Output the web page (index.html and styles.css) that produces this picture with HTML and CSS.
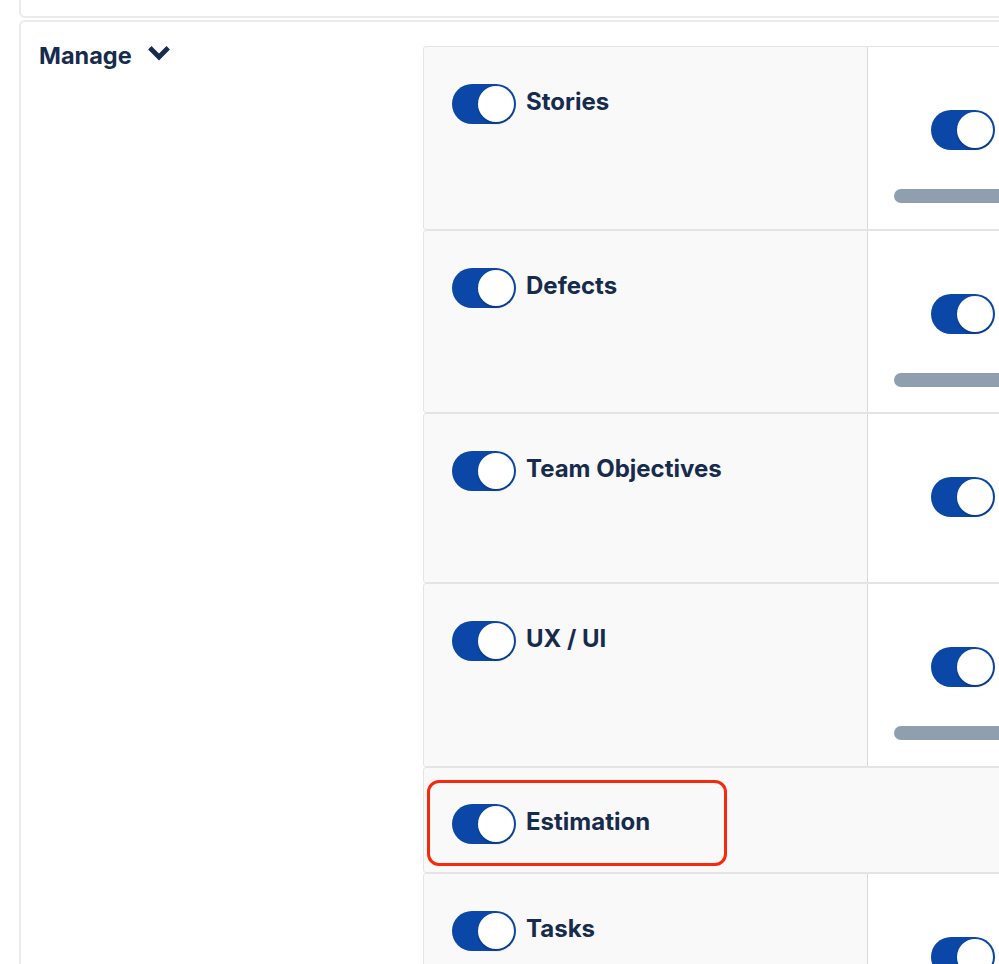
FILE: index.html
```html
<!DOCTYPE html>
<html lang="en">
<head>
<meta charset="utf-8">
<title>Manage</title>
<link rel="stylesheet" href="styles.css">
</head>
<body>
<div class="top-card"></div>
<div class="card">
  <div class="side">
    <div class="side-title">
      <span>Manage</span>
      <svg class="chev" width="22" height="15" viewBox="0 0 22 15"><polyline points="3.5,3.5 11,11 18.5,3.5" fill="none" stroke="#172b4d" stroke-width="4.8" stroke-linejoin="miter" stroke-linecap="square"/></svg>
    </div>
  </div>
  <div class="grid">
    <div class="row r1">
      <div class="cell-left"><div class="item"><span class="toggle"><span class="knob"></span></span><span class="label">Stories</span></div></div>
      <div class="cell-right"><span class="toggle toggle-r"><span class="knob"></span></span><div class="bar"></div></div>
    </div>
    <div class="row r2">
      <div class="cell-left"><div class="item"><span class="toggle"><span class="knob"></span></span><span class="label">Defects</span></div></div>
      <div class="cell-right"><span class="toggle toggle-r"><span class="knob"></span></span><div class="bar"></div></div>
    </div>
    <div class="row r3">
      <div class="cell-left"><div class="item"><span class="toggle"><span class="knob"></span></span><span class="label">Team Objectives</span></div></div>
      <div class="cell-right"><span class="toggle toggle-r"><span class="knob"></span></span></div>
    </div>
    <div class="row r4">
      <div class="cell-left"><div class="item"><span class="toggle"><span class="knob"></span></span><span class="label">UX / UI</span></div></div>
      <div class="cell-right"><span class="toggle toggle-r"><span class="knob"></span></span><div class="bar"></div></div>
    </div>
    <div class="row r5">
      <div class="cell-full">
        <div class="highlight"><div class="item"><span class="toggle"><span class="knob"></span></span><span class="label">Estimation</span></div></div>
      </div>
    </div>
    <div class="row r6">
      <div class="cell-left"><div class="item"><span class="toggle"><span class="knob"></span></span><span class="label">Tasks</span></div></div>
      <div class="cell-right"><span class="toggle toggle-r"><span class="knob"></span></span></div>
    </div>
  </div>
</div>
</body>
</html>
```

FILE: styles.css
```css
* { box-sizing: border-box; }
html, body { margin: 0; padding: 0; }
body {
  width: 999px;
  height: 964px;
  overflow: hidden;
  background: #fff;
  font-family: Inter, "Noto Sans", "Liberation Sans", sans-serif;
  color: #172b4d;
}
.top-card {
  margin-left: 19px;
  width: 1200px;
  height: 18px;
  border: 2px solid #ebebeb;
  border-top: 0;
  border-right: 0;
  border-bottom-left-radius: 6px;
}
.card {
  margin-top: 2px;
  margin-left: 19px;
  width: 1300px;
  height: 1200px;
  border: 2px solid #ebebeb;
  border-right: 0;
  border-radius: 6px 0 0 6px;
  display: flex;
  align-items: flex-start;
}
.side {
  flex: none;
  width: 402px;
  padding: 20px 0 0 18px;
}
.side-title {
  display: flex;
  align-items: center;
  gap: 16px;
  font-size: 23.5px;
  line-height: 28px;
  font-weight: 700;
}
.chev { margin-top: -5px; }
.grid {
  flex: none;
  width: 760px;
  margin-top: 24px;
  display: flex;
  flex-direction: column;
}
.row {
  display: flex;
  border: 1px solid #e4e4e4;
  border-radius: 3px;
  background: #f9f9f9;
}
.r1 { height: 184px; }
.r2 { height: 183px; }
.r3 { height: 170px; }
.r4 { height: 184px; }
.r5 { height: 106px; }
.r6 { height: 200px; }
.cell-left {
  flex: none;
  width: 444px;
  padding: 37px 0 0 28px;
  border-right: 1px solid #dadada;
}
.cell-right {
  flex: 1;
  background: #fff;
  padding: 63px 0 0 26px;
}
.cell-full {
  flex: 1;
  padding: 12px 0 0 3px;
}
.highlight {
  width: 300px;
  height: 86px;
  border: 3px solid #f7290c;
  border-radius: 12px;
  padding: 21px 0 0 22px;
}
.item {
  display: flex;
  align-items: flex-start;
  gap: 10px;
}
.label {
  font-size: 24px;
  line-height: 28px;
  font-weight: 700;
  padding-top: 4px;
  white-space: nowrap;
}
.toggle {
  position: relative;
  display: block;
  flex: none;
  width: 64px;
  height: 40px;
  border-radius: 20px;
  background: #0a47a6;
}
.knob {
  position: absolute;
  top: 2px;
  right: 2px;
  width: 36px;
  height: 36px;
  border-radius: 50%;
  background: #fff;
  box-shadow: 0 2px 2px rgba(0, 0, 0, 0.18);
}
.toggle-r { margin-left: 37px; }
.bar {
  margin-top: 39px;
  width: 300px;
  height: 14px;
  border-radius: 7px;
  background: #8f9fb0;
}
```
